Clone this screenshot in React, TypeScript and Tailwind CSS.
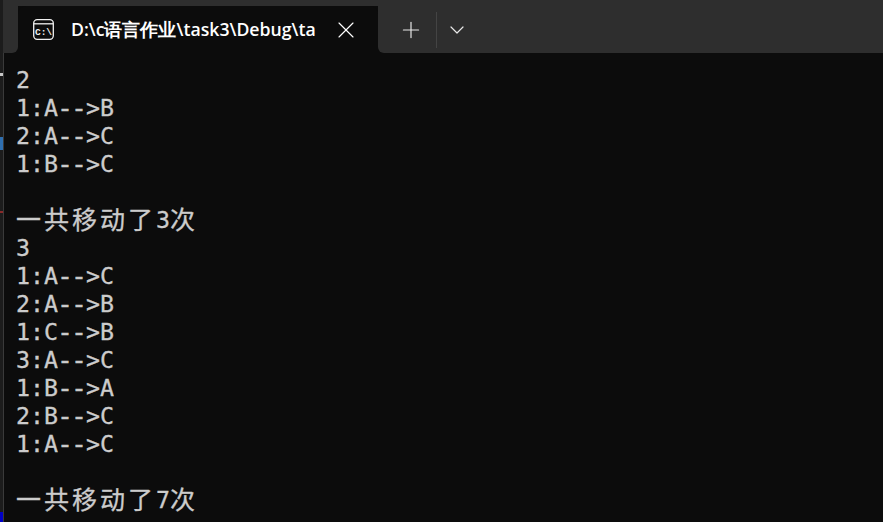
import { Plus, ChevronDown, X } from "lucide-react";

const mono = "font-['DejaVu_Sans_Mono','Liberation_Mono',monospace]";
const cjk = "font-['Noto_Sans_CJK_SC',sans-serif] text-[25px] leading-[24px]";

// Liberation Mono has the longer hyphen, closer to the console font
function Move({ from, to, disk }: { from: string; to: string; disk: number }) {
  return (
    <div className="h-[28px] whitespace-pre">
      {disk}:{from}
      <span className="font-['Liberation_Mono',monospace] [-webkit-text-stroke:0.7px_#cccccc]">--</span>
      {">"}
      {to}
    </div>
  );
}

// CJK glyphs sit on a two-cell grid, the digit on a single cell
function Total({ count }: { count: number }) {
  return (
    <div className="flex h-[28px] items-start whitespace-pre">
      <span className={`w-[140px] tracking-[3px] ${cjk}`}>一共移动了</span>
      <span className="w-[14px]">{count}</span>
      <span className={`w-[28px] ${cjk}`}>次</span>
    </div>
  );
}

function ConsoleIcon() {
  return (
    <svg width="21" height="21" viewBox="0 0 21 21" fill="none" stroke="#f2f2f2" strokeWidth="1.3">
      <rect x="0.7" y="0.7" width="19.6" height="19.6" rx="3.5" />
      <path d="M1 4.8h19" />
      <text x="10.5" y="15.5" textAnchor="middle" fontFamily="Liberation Mono, monospace" fontWeight="700" fontSize="9.5" fill="#f2f2f2" stroke="none">
        {"C:\\"}
      </text>
    </svg>
  );
}

// sliver of the desktop showing past the window edge
function DesktopEdge() {
  return (
    <div className="flex w-[3px] shrink-0 flex-col bg-[#1c1c1c]">
      <div className="h-[73px]" />
      <div className="h-[3px] bg-[#c8c8c8]" />
      <div className="h-[61px]" />
      <div className="h-[13px] bg-[#2f6fb0]" />
      <div className="h-[61px]" />
      <div className="h-[2px] bg-[#8a2a2a]" />
      <div className="h-[299px]" />
      <div className="h-[10px] bg-[#0000c8]" />
    </div>
  );
}

export default function App() {
  return (
    <div className="flex h-[522px] w-[883px] overflow-hidden bg-[#0c0c0c]">
      <DesktopEdge />
      <div className="flex min-w-0 flex-1 flex-col">
        <div className="flex h-[53px] shrink-0 bg-[#0c0c0c]">
          <div className="w-[15px] rounded-br-[6px] bg-[#2e2e2e]" />
          <div className="flex flex-col">
            <div className="h-[6px] bg-[#2e2e2e]" />
            <div className="flex h-[47px] w-[360px] items-center rounded-t-[8px] bg-[#0c0c0c] pl-[15px]">
              <ConsoleIcon />
              <span className="ml-[17px] w-[246px] overflow-hidden font-['Open_Sans',sans-serif] text-[17.7px] font-semibold whitespace-nowrap text-white">
                {"D:\\c语言作业\\task3\\Debug\\ta"}
              </span>
              <X className="ml-[15px] text-white" size={28} strokeWidth={1} />
            </div>
          </div>
          <div className="flex flex-1 items-center rounded-bl-[6px] bg-[#2e2e2e] pt-[6px]">
            <Plus className="ml-[20px] text-[#e8e8e8]" size={26} strokeWidth={1.1} />
            <div className="ml-[12px] h-[36px] w-px bg-[#444444]" />
            <ChevronDown className="ml-[8px] text-[#e8e8e8]" size={24} strokeWidth={1.2} />
          </div>
        </div>
        <div className="flex flex-1">
          <div className="w-px shrink-0 bg-[#3a3a3a]" />
          <div className={`flex-1 pt-[13px] pl-[12px] text-[23.25px] leading-[28px] text-[#cccccc] [-webkit-text-stroke:0.3px_#cccccc] ${mono}`}>
            <div className="h-[28px]">2</div>
            <Move disk={1} from="A" to="B" />
            <Move disk={2} from="A" to="C" />
            <Move disk={1} from="B" to="C" />
            <div className="h-[28px]" />
            <Total count={3} />
            <div className="h-[28px]">3</div>
            <Move disk={1} from="A" to="C" />
            <Move disk={2} from="A" to="B" />
            <Move disk={1} from="C" to="B" />
            <Move disk={3} from="A" to="C" />
            <Move disk={1} from="B" to="A" />
            <Move disk={2} from="B" to="C" />
            <Move disk={1} from="A" to="C" />
            <div className="h-[28px]" />
            <Total count={7} />
          </div>
        </div>
      </div>
    </div>
  );
}
